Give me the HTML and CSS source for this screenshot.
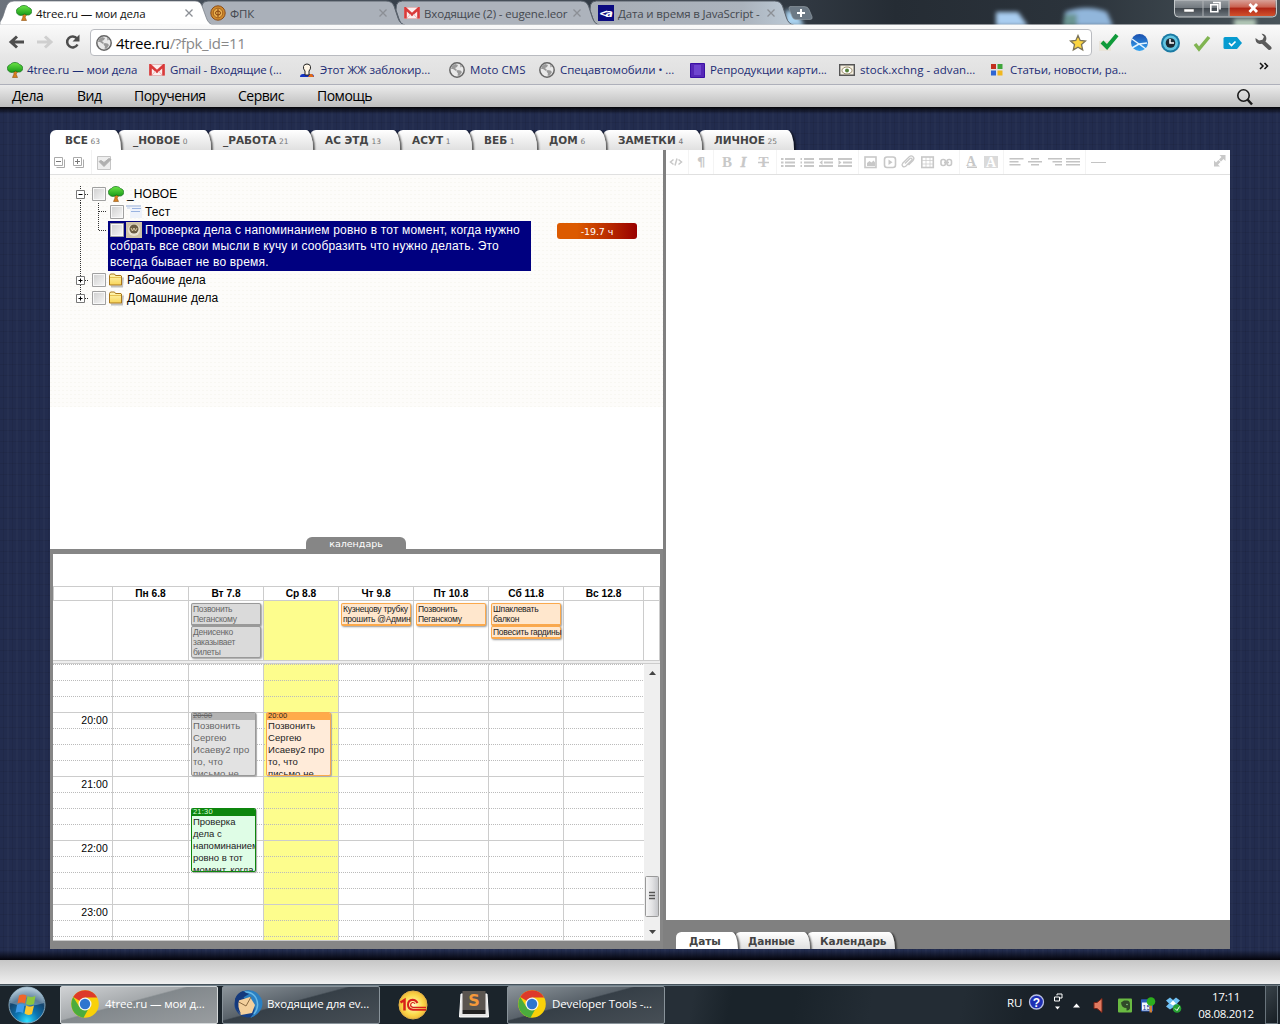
FILE: index.html
```html
<!DOCTYPE html>
<html lang="ru">
<head>
<meta charset="utf-8">
<title>4tree.ru — мои дела</title>
<link rel="stylesheet" href="styles.css">
</head>
<body>
<svg class="defs" width="0" height="0">
  <defs>
    <linearGradient id="gGreen" x2="0" y2="1"><stop offset="0" stop-color="#6be446"/><stop offset="1" stop-color="#189a18"/></linearGradient>
    <linearGradient id="gFolder" x2="0" y2="1"><stop offset="0" stop-color="#fff8b8"/><stop offset="1" stop-color="#f8d458"/></linearGradient>
    <linearGradient id="gCheck" x2="1" y2="1"><stop offset="0" stop-color="#d2d2d2"/><stop offset="1" stop-color="#f4f4f4"/></linearGradient>
    <linearGradient id="gBlue" x2="0" y2="1"><stop offset="0" stop-color="#1a4fae"/><stop offset="1" stop-color="#35a5f2"/></linearGradient>
    <radialGradient id="gOrb" cx=".5" cy=".95" r=".9"><stop offset="0" stop-color="#2fe0ff"/><stop offset=".35" stop-color="#0c77b5"/><stop offset=".7" stop-color="#15456e"/><stop offset="1" stop-color="#8fb0c6"/></radialGradient>
    <radialGradient id="gGold"><stop offset="0" stop-color="#fffbd0"/><stop offset=".7" stop-color="#fbd94a"/><stop offset="1" stop-color="#f0b93a"/></radialGradient>
  </defs>
  <symbol id="tree" viewBox="0 0 16 16"><path d="M6.500 9l.5 3-1.500 3.500h5L9 12l2.500-3z" fill="#d98020" stroke="#8f5412" stroke-width=".6"/><path d="M8 .5c2 0 3.500.7 4.500 2C14.500 3 16 4.500 15.600 6.500 15.600 9 13.500 10.500 11 10L8.500 9 6 10.200C3 11 .5 9 .4 6.500.3 4.500 1.500 3 3.500 2.500 4.500 1 6 .5 8 .5z" fill="url(#gGreen)" stroke="#12701a" stroke-width=".7"/></symbol>
  <symbol id="gmail" viewBox="0 0 16 12"><path d="M.5.5h15v11H.5z" fill="#fbeeee" stroke="#e3b7b7"/><path d="M1.500 11.500V1.500L8 7.500l6.500-6v10" fill="none" stroke="#d93a3a" stroke-width="2.600"/><path d="M3 11l3.500-4M13 11L9.500 7" stroke="#e8b5b5" fill="none"/></symbol>
  <symbol id="globe" viewBox="0 0 16 16"><circle cx="8" cy="8" r="7.200" fill="#e9e9e9" stroke="#666" stroke-width="1.500"/><path d="M3 4l3-2 3 1-1 2-2 1 2 2-1 1-3-2-2 0zM8.500 8l3 .5 1.500 1.500-2.500 4-2-.5 .5-2-1.500-2zM11 2.500l2 2-1.500 1z" fill="#999"/></symbol>
  <symbol id="folder" viewBox="0 0 16 16"><path d="M3 14.500h11l1-9" stroke="#999" stroke-width="2" fill="none" opacity=".6"/><path d="M1.500 13V3.500l1-1.500h4l1 1.500h5.500l.5.500V13z" fill="url(#gFolder)" stroke="#a9761a"/><path d="M2 5.500h11" stroke="#e6c050"/></symbol>
  <symbol id="box" viewBox="0 0 14 14"><path d="M.5.5h13v13H.5z" fill="#f8f8f8" stroke="#a0a0a0"/><path d="M2 2h10v10H2z" fill="url(#gCheck)"/></symbol>
  <symbol id="chrome" viewBox="0 0 28 28"><circle cx="14" cy="14" r="13.800" fill="#f9d109"/><path d="M14 14L2.200 7A13.800 13.800 0 0 1 26.200 7.500H14z" fill="#dd3a2a"/><path d="M2.200 7A13.800 13.800 0 0 0 12.500 27.700L18.500 17 14 14 8.500 17z" fill="#4bac3d"/><circle cx="14" cy="14" r="6.500" fill="#f4f4f4"/><circle cx="14" cy="14" r="5.200" fill="#2e75cf"/></symbol>
</svg>

<header class="titlebar">
  <svg class="titleart" width="1280" height="25" viewBox="0 0 1280 25">
    <defs>
      <linearGradient id="sky"><stop offset="0" stop-color="#6c737c"/><stop offset=".2" stop-color="#3a434e"/><stop offset=".63" stop-color="#303841"/><stop offset=".7" stop-color="#252c34"/><stop offset=".84" stop-color="#2b333b"/><stop offset="1" stop-color="#49545a"/></linearGradient>
      <linearGradient id="red" x2="0" y2="1"><stop offset="0" stop-color="#d9a198"/><stop offset=".45" stop-color="#c9604f"/><stop offset=".5" stop-color="#ae2415"/><stop offset="1" stop-color="#d2512c"/></linearGradient>
      <linearGradient id="glass" x2="0" y2="1"><stop offset="0" stop-color="#989da2"/><stop offset=".48" stop-color="#70777d"/><stop offset=".5" stop-color="#41484f"/><stop offset="1" stop-color="#717980"/></linearGradient>
      <linearGradient id="inact"><stop offset="0" stop-color="#a8aeb6"/><stop offset=".75" stop-color="#abb3bd"/><stop offset="1" stop-color="#bccad6"/></linearGradient>
      <filter id="soft" x="-50%" y="-50%" width="200%" height="200%"><feGaussianBlur stdDeviation="2"/></filter>
    </defs>
    <path d="M0 0h1280v25H0z" fill="url(#sky)"/>
    <g filter="url(#soft)"><path d="M996 12h22l10 14h-32z" fill="#a9cdf0"/><path d="M1065 12q22-8 42 0l6 14h-50z" fill="#91b6db"/><path d="M1065 14h12v12h-14z" fill="#6b9593"/><path d="M1234 19h22v8h-22z" fill="#b5cab9"/><path d="M786 10q12 0 18 16h-20z" fill="#a9d2ef"/></g>
    <path d="M590.500 5q1-4 6-4h178q6 0 8 5l4 12q2 6 7 7H598q-4-1-5-6l-3-9z" fill="url(#inact)" stroke="#59616b"/>
    <path d="M396.500 5q1-4 6-4h178q6 0 8 5l4 12q2 6 7 7H404q-4-1-5-6l-3-9z" fill="#adb3bc" stroke="#59616b"/>
    <path d="M202 5q1-4 6-4h178q6 0 8 5l4 12q2 6 7 7H200z" fill="#aab0b9" stroke="#59616b"/>
    <path d="M0 25V22Q3 18 5 10L7 5q2-4 7-4h181q5 0 7 5l4 11q2 7 8 8.500z" fill="#fff" stroke="#717780" stroke-width=".7"/>
    <path d="M0 24.500h1280v1H0z" fill="#fafafa"/>
    <path d="M790 6.500h14q4 0 5 3l3 7q1 3-2 3h-14q-3 0-4-3l-3-8q0-2 1-2z" fill="#6c7985" stroke="#99a2aa" stroke-width=".6"/>
    <path d="M797 13h8M801 9v8" stroke="#fff" stroke-width="2"/>
    <path d="M1174.500 0v13q0 4 4 4h94q4 0 4-4V0z" fill="url(#glass)" stroke="#c5c9cb"/>
    <path d="M1229.500 0h46v13q0 3-3 3h-43z" fill="url(#red)"/><path d="M1203 0v16M1229 0v16" stroke="#b0b4b7"/>
    <path d="M1184 9h10v3h-10z" fill="#fff" stroke="#555" stroke-width=".5"/><path d="M1210.800 4.800h7v7h-7zM1213 2.500h7v7" stroke="#fff" stroke-width="1.600" fill="none"/>
    <path d="M1249.500 4l7.500 8M1257 4l-7.500 8" stroke="#fff" stroke-width="2.800"/>
  </svg>
  <div class="btab"><svg width="16" height="16"><use href="#tree"/></svg><span class="on">4tree.ru — мои дела</span><svg class="x" width="8" height="8"><path d="M.5.5l7 7M7.500.5l-7 7"/></svg></div>
  <div class="btab"><svg width="16" height="16" viewBox="0 0 16 16"><circle cx="8" cy="8" r="7.200" fill="#cf8a2c" stroke="#8c4c18"/><circle cx="8" cy="8" r="4.800" fill="#e9b050" stroke="#a35f1c"/><path d="M8 4v8M5.500 8a2.500 2 0 1 0 5 0a2.500 2 0 1 0-5 0" fill="none" stroke="#85410e"/></svg><span>ФПК</span><svg class="x" width="8" height="8"><path d="M.5.5l7 7M7.500.5l-7 7"/></svg></div>
  <div class="btab"><svg width="16" height="12"><use href="#gmail"/></svg><span>Входящие (2) - eugene.leor</span><svg class="x" width="8" height="8"><path d="M.5.5l7 7M7.500.5l-7 7"/></svg></div>
  <div class="btab"><svg width="16" height="16" viewBox="0 0 16 16"><path d="M0 0h16v16H0z" fill="#0b0b80"/><text x="1" y="12" font-family="DejaVu Sans" font-size="11" font-weight="bold" font-style="italic" fill="#fff" textLength="14">&lt;a</text></svg><span>Дата и время в JavaScript -</span><svg class="x" width="8" height="8"><path d="M.5.5l7 7M7.500.5l-7 7"/></svg></div>
</header>

<div class="chrome">
  <div class="navbar">
    <svg width="82" height="26" viewBox="0 0 82 26"><path d="M24 13H12M17 7.500L11 13l6 5.500" fill="none" stroke="#4d4d4d" stroke-width="3"/><path d="M37 13h12M45 7.500l6 5.500-6 5.500" fill="none" stroke="#cfcfcf" stroke-width="3"/><path d="M77 9.500A5.500 5.500 0 1 0 77.500 15.500" fill="none" stroke="#4d4d4d" stroke-width="2.500"/><path d="M79.500 5.500v7h-7z" fill="#4d4d4d"/></svg>
    <div class="omnibox"><svg width="16" height="16"><use href="#globe"/></svg><span class="url">4tree.ru<b>/?fpk_id=11</b></span><svg class="star" width="18" height="18" viewBox="0 0 18 18"><path d="M9 1.500l2.200 5 5.300.5-4 3.600 1.200 5.300L9 13.200 4.300 15.900l1.200-5.300-4-3.600 5.300-.5z" fill="#fbd541" stroke="#7b7358" stroke-width="1.300"/></svg></div>
    <svg width="184" height="26" viewBox="1096 0 184 26">
      <path d="M1099 12h12v10h-12z" fill="#e9e4da"/><path d="M1102 13l5 5 10-12" fill="none" stroke="#109a3a" stroke-width="4"/>
      <circle cx="1139.500" cy="13.500" r="8.500" fill="url(#gBlue)"/><path d="M1132 10l7 5 8-1M1132 19l7-4 7 5" stroke="#e4f4ff" stroke-width="1.500" fill="none"/>
      <circle cx="1170.500" cy="14" r="9.500" fill="#1c7ba4"/><circle cx="1170.500" cy="14" r="7.500" fill="#63c6e2"/><circle cx="1170.500" cy="14" r="4.800" fill="#1c2a33"/><path d="M1170 10v4h4" stroke="#fff" stroke-width="1.500" fill="none"/>
      <path d="M1195 15l4 5 10-12" fill="none" stroke="#80b451" stroke-width="3.500"/>
      <path d="M1225 8h12l5 6-5 6h-12q-1.500 0-1.500-1.500v-9Q1223.500 8 1225 8z" fill="#079bd0"/><path d="M1229 14l2.500 2.500 4-4" stroke="#fff" stroke-width="1.700" fill="none"/>
      <path d="M1263 13l6.500 6" stroke="#5a5a5a" stroke-width="4" stroke-linecap="round"/><path d="M1255.500 9q-.5 5 4 6 3 .5 5.500-2 2.500-3 .5-6.500-1.500-2-4-1.700l2.500 3-1.500 3-3.500.7z" fill="#5a5a5a"/>
    </svg>
  </div>
  <nav class="bookmarks">
    <a style="width:142px"><svg width="16" height="16"><use href="#tree"/></svg><span>4tree.ru — мои дела</span></a>
    <a style="width:150px"><svg width="16" height="12"><use href="#gmail"/></svg><span class="s16">Gmail - Входящие (...</span></a>
    <a style="width:150px"><svg width="16" height="16" viewBox="0 0 16 16"><path d="M1 15q0-3 3-3h8q3 0 3 3z" fill="#1231c4"/><path d="M9 15l2-3h2l2 3z" fill="#e26a1a"/><path d="M6 13V9Q4 7 4.500 4.500 5 2 8 2t3.500 2.500Q12 7 10 9v4z" fill="#fff6e6" stroke="#222"/></svg><span class="s16">Этот ЖЖ заблокир...</span></a>
    <a style="width:90px"><svg width="16" height="16"><use href="#globe"/></svg><span class="s16 wide">Moto CMS</span></a>
    <a style="width:151px"><svg width="16" height="16"><use href="#globe"/></svg><span class="s16">Спецавтомобили • ...</span></a>
    <a style="width:149px"><svg width="15" height="15" viewBox="0 0 15 15"><path d="M.5.5h14v14H.5z" fill="#5628b8" stroke="#3a10a4"/><path d="M4 2h7v10H4z" fill="#6f45d0"/></svg><span class="s16">Репродукции карти...</span></a>
    <a style="width:150px"><svg width="16" height="16" viewBox="0 0 16 16"><path d="M.7 2.700h14.600v10.600H.7z" fill="#f4efe0" stroke="#555" stroke-width="1.400"/><ellipse cx="8" cy="8.500" rx="5" ry="3.500" fill="#fff" stroke="#9a8c6b"/><circle cx="8" cy="8.500" r="2" fill="#55803b"/></svg><span class="s16 wide">stock.xchng - advan...</span></a>
    <a style="width:150px"><svg width="16" height="16" viewBox="0 0 16 16"><path d="M2 2h5v5H2z" fill="#c2301f"/><path d="M8.500 2h5v5h-5z" fill="#3ea63c"/><path d="M2 8.500h5v5H2z" fill="#2e66d4"/><path d="M8.500 8.500h5v5h-5z" fill="#f0b71f"/></svg><span class="s16">Статьи, новости, ра...</span></a>
    <svg class="more" width="10" height="8" viewBox="0 0 10 8"><path d="M1 1l3 3-3 3M5.500 1l3 3-3 3" fill="none" stroke="#111" stroke-width="1.500"/></svg>
  </nav>
</div>

<nav class="menu"><span style="width:65px">Дела</span><span style="width:57px">Вид</span><span style="width:104px">Поручения</span><span style="width:79px">Сервис</span><span>Помощь</span>
  <svg width="20" height="18" viewBox="0 0 20 18"><circle cx="8.500" cy="7.500" r="5.700" fill="none" stroke="#1a1a1a" stroke-width="1.600"/><path d="M12.500 11.500l4.500 5" stroke="#1a1a1a" stroke-width="2.500"/></svg>
</nav>

<main class="desk">
  <div class="tabs top">
    <div class="tab active" style="width:71px">ВСЕ <small>63</small></div>
    <div class="tab" style="width:93px">_НОВОЕ <small>0</small></div>
    <div class="tab" style="width:105px">_РАБОТА <small>21</small></div>
    <div class="tab" style="width:90px">АС ЭТД <small>13</small></div>
    <div class="tab" style="width:75px">АСУТ <small>1</small></div>
    <div class="tab" style="width:68px">ВЕБ <small>1</small></div>
    <div class="tab" style="width:72px">ДОМ <small>6</small></div>
    <div class="tab" style="width:99px">ЗАМЕТКИ <small>4</small></div>
    <div class="tab" style="width:95px">ЛИЧНОЕ <small>25</small></div>
  </div>
  <div class="panes">
    <section class="left">
      <div class="treebar"><svg width="70" height="24" viewBox="0 0 70 24"><g fill="none" stroke="#aaa"><path d="M4.500 7.500h8v8h-8zM14.500 9.500v8h-8M23.500 7.500h8v8h-8zM33.500 9.500v8h-8"/></g><path d="M6 11.500h5M25 11.500h5M27.500 9v5" stroke="#777"/><path d="M41.500 0v24" stroke="#f2f2f2"/><path d="M47.500 6.500h13v13h-13z" fill="#eee" stroke="#c5c5c5"/><path d="M49 11.500l5 5 7-7-2-1-5 4-3-2z" fill="#b0b0b0" stroke="#b0b0b0"/></svg></div>
      <div class="tree">
        <div class="row"><svg width="18" height="18"><path d="M6.500 1v17M7 9.500h7" class="dot"/><path d="M2.500 5.500h8v8h-8z" class="knob"/><path d="M4.500 9.500h4" class="sign"/></svg><svg class="cb" width="14" height="14"><use href="#box"/></svg><svg width="16" height="16"><use href="#tree"/></svg><span>_НОВОЕ</span></div>
        <div class="row"><svg width="36" height="18"><path d="M6.500 0v18M24.500 0v18M25 8.500h7" class="dot"/></svg><svg class="cb" width="14" height="14"><use href="#box"/></svg><svg width="16" height="16" viewBox="0 0 16 16"><path d="M4 3h12v11H4z" fill="#eef2fa"/><path d="M0 1h15v2H0z" fill="#c7d3e8"/><path d="M1 3h3v2H1z" fill="#dde5f2"/><path d="M6 4.500h9M5 7.500h9" stroke="#9ab3e0"/></svg><span>Тест</span></div>
        <div class="row tall"><svg width="34" height="50"><path d="M6.500 0v50M24.500 0v9.500h8" class="dot"/></svg><p class="sel"><svg width="14" height="14"><use href="#box"/></svg><svg class="pic" width="16" height="16" viewBox="0 0 16 16"><path d="M0 0h16v16H0z" fill="#cfc3a6"/><circle cx="8" cy="8" r="6" fill="#e9e2d2"/><circle cx="8" cy="7" r="4.500" fill="#6a5c42"/><path d="M5 6l1.500 3L8 6l1.500 3L11 6" stroke="#d9caa5" fill="none"/></svg><span>Проверка дела с напоминанием ровно в тот момент, когда нужно<br>собрать все свои мысли в кучу и сообразить что нужно делать. Это<br>всегда бывает не во время.</span></p><div class="due">-19.7 ч</div></div>
        <div class="row"><svg width="18" height="18"><path d="M6.500 0v18M7 9.500h7" class="dot"/><path d="M2.500 5.500h8v8h-8z" class="knob"/><path d="M4.500 9.500h4M6.500 7.500v4" class="sign"/></svg><svg class="cb" width="14" height="14"><use href="#box"/></svg><svg width="16" height="16"><use href="#folder"/></svg><span>Рабочие дела</span></div>
        <div class="row"><svg width="18" height="18"><path d="M6.500 0v9M7 9.500h7" class="dot"/><path d="M2.500 5.500h8v8h-8z" class="knob"/><path d="M4.500 9.500h4M6.500 7.500v4" class="sign"/></svg><svg class="cb" width="14" height="14"><use href="#box"/></svg><svg width="16" height="16"><use href="#folder"/></svg><span>Домашние дела</span></div>
      </div>
      <div class="handle"><span>календарь</span></div>
      <div class="cal">
        <div class="days"><b></b><b>Пн 6.8</b><b>Вт 7.8</b><b>Ср 8.8</b><b>Чт 9.8</b><b>Пт 10.8</b><b>Сб 11.8</b><b>Вс 12.8</b><b></b></div>
        <div class="allday">
          <div></div><div></div>
          <div><p class="past">Позвонить<br>Пеганскому</p><p class="past">Денисенко<br>заказывает<br>билеты</p></div>
          <div class="today"></div>
          <div><p>Кузнецову трубку<br>прошить @Админ</p></div>
          <div><p>Позвонить<br>Пеганскому</p></div>
          <div><p>Шпаклевать<br>балкон</p><p>Повесить гардины</p></div>
          <div></div><div></div>
        </div>
        <div class="split"></div>
        <div class="grid">
          <div class="col hours"><time>20:00</time><time>21:00</time><time>22:00</time><time>23:00</time></div>
          <div class="col"></div>
          <div class="col"><div class="ev past"><h6>20:00</h6>Позвонить Сергею Исаеву2 про то, что письмо не</div><div class="ev green"><h6>21:30</h6>Проверка дела с напоминанием ровно в тот момент, когда</div></div>
          <div class="col today"><div class="ev"><h6>20:00</h6>Позвонить Сергею Исаеву2 про то, что письмо не</div></div>
          <div class="col"></div><div class="col"></div><div class="col"></div><div class="col last"></div>
          <div class="scroll"><svg width="16" height="276" viewBox="0 0 16 276"><defs><linearGradient id="th"><stop offset="0" stop-color="#f6f6f6"/><stop offset=".5" stop-color="#e3e3e5"/><stop offset="1" stop-color="#c3c4c8"/></linearGradient></defs><path d="M5 11l3.500-4 3.500 4zM5 266h7l-3.500 4z" fill="#444"/><rect x="1.500" y="212.500" width="13" height="40" rx="1" fill="url(#th)" stroke="#999"/><path d="M5 228.500h6M5 231.500h6M5 234.500h6" stroke="#555" stroke-width="1.500"/></svg></div>
        </div>
      </div>
    </section>
    <section class="right">
      <div class="editbar">
        <svg width="564" height="24" viewBox="666 0 564 24">
          <g stroke="#f4f4f4"><path d="M688.500 0v24M713.500 0v24M776.500 0v24M858.500 0v24M959.500 0v24M1003.500 0v24M1085.500 0v24"/></g>
          <g fill="none" stroke="#c8c8c8" stroke-width="1.500"><path d="M673.500 9.500l-3 2.500 3 2.500M678.500 9.500l3 2.500-3 2.500M677 8.500l-2 7"/></g>
          <g fill="#c8c8c8" font-family="Liberation Serif" font-weight="bold" font-size="15"><text x="697" y="16" font-family="DejaVu Sans" font-size="13">¶</text><text x="722" y="17">B</text><text x="740.500" y="17" font-style="italic" stroke="#c8c8c8" stroke-width=".4">I</text><text x="758.500" y="17">T</text><text x="966" y="16" font-size="14">A</text></g>
          <path d="M758 12.500h11M967 17.300h10" stroke="#c8c8c8" stroke-width="1.600"/>
          <g stroke="#c8c8c8" stroke-width="2"><path d="M785 9h10M785 12.500h10M785 16h10M804 9h10M804 12.500h10M804 16h10M819 9h14M824 12.500h9M819 16h14M838 9h14M843 12.500h9M838 16h14"/><path d="M781 9h2.500M781 12.500h2.500M781 16h2.500M800.500 9h1.500M800.500 12.500h1.500M800.500 16h1.500"/></g>
          <path d="M822.500 10v5l-3-2.500zM838.500 10v5l3-2.500z" fill="#c8c8c8"/>
          <g fill="none" stroke="#c8c8c8" stroke-width="1.600"><rect x="865" y="7" width="11" height="10.500"/><path d="M867 16v-3l2.500-2 2 1.500 2-2 1.500 2v3.500z" fill="#c8c8c8" stroke="none"/><rect x="884.500" y="7" width="11" height="10.500" rx="2.500"/><path d="M888.500 9.500v5.500l4-2.700z" fill="#c8c8c8" stroke="none"/><path d="M905 13.500l5-5q1-.8 1.700 0t0 1.700l-6 6q-1.700 1.300-3 0t0-3l6.500-6.500q2-1.500 3.800 0t0 3.800l-4.500 4.500" stroke-width="1.300"/><rect x="921.800" y="7" width="11.500" height="10.500"/><path d="M922 10.500h11M922 14h11M926 7v10M930 7v10" stroke-width=".7"/><rect x="941" y="9.500" width="4.500" height="6" rx="2"/><rect x="947" y="9.500" width="4.500" height="6" rx="2"/><path d="M944 12.500h5"/></g>
          <path d="M984 6h14v12h-14z" fill="#dadada"/><text x="986" y="17" fill="#fff" font-family="Liberation Serif" font-weight="bold" font-size="14">A</text>
          <g stroke="#c4c4c4" stroke-width="1.500"><path d="M1009.500 8.700h14M1009.500 11.700h9M1009.500 14.700h11M1031 8.700h8M1028 11.700h14M1031 14.700h8M1048 8.700h14M1052.500 11.700h9.500M1055 14.700h7M1066 8.700h14M1066 11.700h14M1066 14.700h14"/><path d="M1091 12.500h15" stroke-width="1"/></g>
          <path d="M1219.500 5h6v6l-2-2-2.500 2.500-2-2 2.500-2.500zM1220 16.500h-6v-6l2 2 2.500-2.500 2 2-2.500 2.500z" fill="#c8c8c8"/>
        </svg>
      </div>
      <div class="paper"></div>
      <div class="tabs bottom">
        <div class="tab active" style="width:62px">Даты</div>
        <div class="tab" style="width:75px">Данные</div>
        <div class="tab" style="width:88px">Календарь</div>
      </div>
    </section>
  </div>
</main>
<div class="pagefoot"></div>

<footer class="taskbar">
  <svg class="orb" width="40" height="38" viewBox="0 0 40 38"><circle cx="20" cy="19" r="18" fill="url(#gOrb)" stroke="#84a5b9"/><path d="M3 17a17 16 0 0 1 34 0q-17 6-34 0z" fill="#fff" opacity=".3"/><path d="M12 9.500q4-2 7.500 0L18 17.500q-4-2-7.500 0z" fill="#f0662a"/><path d="M20.500 10q4 2 8-.3L27 18q-4 2-8 0z" fill="#8cc63e"/><path d="M10 19q4-2 7.500 0L16 27q-4-2-7.500 0z" fill="#3f9bea"/><path d="M19 19.500q4 2 8 0L25 28q-4 2-7.500-.5z" fill="#fdc92f"/></svg>
  <div class="task lit"><svg width="28" height="28"><use href="#chrome"/></svg><span>4tree.ru — мои д...</span></div>
  <div class="task"><svg width="30" height="30" viewBox="0 0 30 30"><circle cx="15" cy="15" r="13.500" fill="#163f86"/><path d="M8 3Q18-1 24 4q7 6 5 14-3 8-12 11 6-6 4-12L11 9z" fill="#2a7fc2"/><path d="M12 3q8 0 11 6 4 8-2 16" fill="none" stroke="#67b8e6" stroke-width="1.500"/><path d="M4 12l13-4 5 8-3 8-11 2q-5-5-4-14z" fill="#f3cf9c"/><path d="M4 12l9 5 5-9" fill="none" stroke="#8b6a42"/><path d="M2 10q2-6 8-8 3 2 6 3L6 11q-2 6 2 14-6-4-6-15z" fill="#14397c"/></svg><span class="pull">Входящие для ev...</span></div>
  <svg class="one" width="30" height="30" viewBox="0 0 30 30"><circle cx="15" cy="15" r="14" fill="url(#gGold)" stroke="#e3b449"/><g fill="none" stroke="#d8201a"><path d="M2.500 12.500l4-2.500V20.500" stroke-width="2.500"/><path d="M19.500 13q-1.500-3.300-5-3.300-4.500.5-4.500 5t5 5H28" stroke-width="2"/><path d="M17 13.800q-.8-1.500-2.600-1.300-1.800.6-1.800 2.500t2.300 2.300H28" stroke-width="1.200"/></g></svg>
  <svg class="subl" width="32" height="30" viewBox="0 0 32 30"><path d="M3 4L1.500 27h29L29 4z" fill="#e5e5e5" stroke="#fff"/><path d="M4.500 1h23v19h-23z" fill="#5a5550"/><path d="M4.500 20h23v4h-23z" fill="#222"/><text x="16" y="16" text-anchor="middle" font-family="DejaVu Sans" font-weight="bold" font-size="16" fill="#f5993a">S</text></svg>
  <div class="task"><svg width="28" height="28"><use href="#chrome"/></svg><span>Developer Tools -...</span></div>
  <span class="lang">RU</span>
  <svg class="tray" width="160" height="26" viewBox="1028 991.500 160 26">
    <circle cx="1037.500" cy="1001.500" r="7" fill="#1e2fb4" stroke="#b8bfe4" stroke-width="1.300"/><text x="1037.500" y="1006" text-anchor="middle" font-family="Liberation Sans" font-weight="bold" font-size="12" fill="#fff">?</text>
    <path d="M1055.500 996.500h5v4h-5zM1058 995v-1.500h5v4h-2" fill="none" stroke="#fff"/><path d="M1056 1006h5l-2.500 3zM1074 1007h7l-3.500-4z" fill="#fff"/>
    <path d="M1095 1002h3l5-4v14l-5-4h-3z" fill="#e07a60" stroke="#7a2417"/>
    <rect x="1119" y="998" width="14" height="14" rx="1" fill="#6aba42"/><path d="M1122 1002l3-2h3q3 0 3 4v4q-1 2.500-3.500 2v-2.500q-5 0-5.500-5.500z" fill="#304a28"/><circle cx="1128" cy="1004" r=".8" fill="#8c8"/>
    <path d="M1142.500 999.500h11v11h-11z" fill="#f2f6ff" stroke="#2b5bb8"/><path d="M1142 999h12v3h-12z" fill="#2b5bb8"/><text x="1143.500" y="1009" font-family="Liberation Sans" font-size="7" fill="#123a93">15</text><path d="M1150.500 1003h2.500v9h-2.500z" fill="#d08037"/><circle cx="1152" cy="1001" r="4.300" fill="#2cae1d"/>
    <path d="M1167 1000l4-3 3 2.500 3-2.500 4 3-3 3 3 3-4 3-3-2-3 2-4-3 3-3z" fill="#6fc0f3"/><path d="M1171 1003l3-3 3 3-3 2z" fill="#fff"/><circle cx="1178" cy="1008" r="4.300" fill="#27a032"/><path d="M1176 1008l2 2 2.500-4" stroke="#fff" fill="none"/>
  </svg>
  <div class="clock"><span>17:11</span><span>08.08.2012</span></div>
  <div class="peek"></div>
</footer>
</body>
</html>
```
FILE: styles.css
```css
* { box-sizing: border-box; }
body { margin: 0; width: 1280px; height: 1024px; overflow: hidden; display: flex; flex-direction: column; font-family: "Liberation Sans", Arial, sans-serif; background: #222b4b; }
.defs { position: absolute; }
svg { display: block; flex: none; }
p, h6 { margin: 0; font-weight: normal; }

/* browser frame */
.titlebar { position: relative; height: 25px; flex: none; display: flex; padding-left: 16px; font: 11.5px/25px "Open Sans", sans-serif; }
.titleart { position: absolute; left: 0; top: 0; }
.btab { position: relative; width: 194px; display: flex; align-items: center; gap: 4px; color: #44484f; white-space: nowrap; padding-top: 1px; }
.btab span { width: 146px; letter-spacing: -.15px; }
.btab .on { color: #111; }
.btab .x { stroke: #8b8f95; stroke-width: 1.300; fill: none; margin-left: -1px; }
.chrome { height: 60px; flex: none; background: linear-gradient(#fafafa, #e6e6e6 55%, #dedede); border-bottom: 1px solid #aeb0ba; }
.navbar { height: 33px; padding-top: 4px; display: flex; gap: 8px; }
.omnibox { width: 1002px; height: 27px; border: 1px solid #b9bbc0; border-radius: 4px; background: #fff; display: flex; align-items: center; padding-left: 5px; }
.navbar > svg:last-child { margin-left: -4px; }
.url { margin-left: 4px; flex: 1; font: 15px/24px "Open Sans", sans-serif; color: #000; letter-spacing: -.32px; }
.url b { font-weight: normal; color: #888; }
.star { margin-right: 4px; }
.bookmarks { display: flex; padding-left: 7px; height: 24px; font: 11.5px/24px "Open Sans", sans-serif; color: #1c2c74; letter-spacing: -.1px; }
.bookmarks a { display: flex; align-items: center; gap: 4px; white-space: nowrap; }
.bookmarks .s16 { margin-left: 1px; }
.bookmarks .wide { letter-spacing: .05px; }
.more { margin: 4px 0 0 120px; }
.menu { height: 22px; flex: none; display: flex; padding-left: 12px; background: linear-gradient(#ececec, #bdbdbd); font: 14px/22px "Open Sans", sans-serif; letter-spacing: -.5px; color: #000; }
.menu svg { margin: 3px 25px 0 auto; }

/* workspace */
.desk { height: 853px; flex: none; padding: 23px 50px 0; display: flex; flex-direction: column;
  background: linear-gradient(#050509, transparent 7px, transparent 843px, #03030a), repeating-linear-gradient(90deg, #0000 0 3px, #0001 3px 4px, #0000 4px 7px, #ffffff05 7px 9px), repeating-linear-gradient(#0000 0 4px, #00000012 4px 5px, #0000 5px 11px), #222c4e; }
.tabs { display: flex; font: bold 10.500px/20px "DejaVu Sans", Verdana, sans-serif; color: #444; }
.tabs.top { height: 20px; }
.tab { position: relative; padding-left: 15px; margin-right: -3px; white-space: nowrap; border-radius: 6px 7px 0 0 / 6px 19px 0 0; background: linear-gradient(#fff, #e0e0e0); box-shadow: 2px 1px 2px #0009; clip-path: inset(0 -4px 0 0); line-height: 21px; }
.tab.active { background: #fff; }
.tab small { font-size: 7.500px; font-weight: normal; color: #777; margin-left: -1px; }
.tab:nth-child(1) { z-index: 9; } .tab:nth-child(2) { z-index: 8; } .tab:nth-child(3) { z-index: 7; } .tab:nth-child(4) { z-index: 6; } .tab:nth-child(5) { z-index: 5; } .tab:nth-child(6) { z-index: 4; } .tab:nth-child(7) { z-index: 3; } .tab:nth-child(8) { z-index: 2; }
.panes { display: flex; height: 799px; background: #808080; }
.left { width: 613px; margin-right: 3px; display: flex; flex-direction: column; background: #fff; }
.treebar, .editbar { height: 25px; border-bottom: 1px solid #e0e0e0; background: #fff; flex: none; }
.tree { height: 232px; padding: 10px 0 0 24px; background: repeating-linear-gradient(90deg, #fdfcfa00 0 2px, #fdfcfa 2px 4px), repeating-linear-gradient(#fdfcfa 0 3px, #f8f7f2 3px 4px); font-size: 12px; }
.row { height: 18px; display: flex; align-items: center; letter-spacing: .12px; }
.row .cb { margin-right: 2px; }
.row > span { margin-left: 3px; }
.row.tall { height: 50px; }
.sel { width: 423px; height: 50px; padding: 1px 2px; background: #000080; color: #fff; line-height: 16px; letter-spacing: .18px; white-space: nowrap; }
.sel svg { display: inline-block; vertical-align: top; margin: 1px 2px 0 0; }
.sel .pic { margin: 0 3px 0 0; }
.due { width: 80px; height: 16px; margin: 0 0 32px 26px; align-self: flex-end; border-radius: 3px; background: linear-gradient(90deg, #dc5a00 25%, #900); color: #fff; font: 9.500px/17px "DejaVu Sans", sans-serif; text-align: center; letter-spacing: -.1px; }
.dot { fill: none; stroke: #333; stroke-dasharray: 1 1; }
.knob { fill: #fff; stroke: #777; }
.sign { stroke: #000; }
.handle { height: 147px; flex: none; padding: 130px 257px 0 256px; border-bottom: 5px solid #868686; }
.handle span { display: block; height: 12px; border-radius: 6px 6px 0 0; background: #868686; color: #fff; font: 9.500px/14px "DejaVu Sans", sans-serif; text-align: center; }

/* calendar */
.cal { height: 395px; padding-top: 32px; border: solid #868686; border-width: 0 3px 8px; background: #fff; }
.days, .allday, .grid { display: grid; grid-template-columns: 60px 76px 75px 75px 75px 75px 75px 80px 16px; }
.days { height: 14px; border-top: 1px solid #ccc; border-left: 1px solid #ccc; font-size: 10.200px; line-height: 13px; text-align: center; grid-template-columns: 59px 76px 75px 75px 75px 75px 75px 80px 16px; }
.days b, .allday > div { border-right: 1px solid #ccc; }
.allday { height: 61px; border: solid #ccc; border-width: 1px 0; }
.allday > div { padding: 2px 2px 0; }
.today { background-color: #fdfd8d; }
.allday p { width: 70px; border: 1px solid #fba94c; border-bottom-width: 2px; border-radius: 2px; background: #ffe7cd; box-shadow: 1px 1px 2px #999; font-size: 8.500px; line-height: 10px; color: #222; letter-spacing: -.25px; padding-left: 1px; white-space: nowrap; }
.allday p.past { background: #dadada; border-color: #999; color: #666; }
.allday p.past + p { border-bottom-width: 1px; }
.split { height: 3px; background: #eee; border-bottom: 1px solid #ccc; }
.grid { height: 277px; border-bottom: 1px solid #ccc; overflow: hidden; }
.col { border-right: 1px solid #ccc; padding: 48px 0 0 2px; height: 276px; overflow: hidden;
  background-image: linear-gradient(#ccc 1px, transparent 1px), conic-gradient(from 0deg at 1px 1px, transparent 0 270deg, #bbb 0);
  background-size: 100% 64px, 2px 16px; background-position: 0 48px, 0 0; }
.col.last { border-right: 0; }
.hours time { display: block; height: 64px; padding: 2px 4px 0 0; text-align: right; font-size: 10.500px; letter-spacing: .1px; }
.ev { width: 65px; height: 64px; overflow: hidden; border: 1px solid #fba94c; border-radius: 2px; background: #ffebd9; box-shadow: 1px 1px 1px #aaa; font-size: 9.500px; line-height: 12px; color: #222; padding-left: 1px; letter-spacing: .08px; }
.ev h6 { margin: -1px -1px 0 -2px; padding-left: 2px; height: 8px; font-size: 7.500px; line-height: 8px; background: #ffab4a; }
.ev.past { background: #e2e2e2; border-color: #999; color: #666; }
.ev.past h6 { background: #b3b3b3; text-decoration: line-through; }
.ev.green { margin-top: 32px; background: #dffde6; border-color: #0d860d; letter-spacing: -.02px; }
.ev.green h6 { background: #0d860d; color: #dfffdf; letter-spacing: .2px; }
.scroll { background: #efefef; }

/* editor */
.right { width: 564px; display: flex; flex-direction: column; }
.paper { height: 745px; background: #fff; }
.bottom { padding: 12px 0 0 10px; }
.bottom .tab { height: 17px; line-height: 19px; padding-left: 13px; letter-spacing: -.12px; }
.pagefoot { height: 24px; flex: none; background: linear-gradient(#c6c6c6, #efefef); }

/* taskbar */
.taskbar { height: 40px; flex: none; display: flex; align-items: center; padding: 0 0 0 7px; border-top: 1px solid #46535c; box-shadow: inset 0 1px #71818b; color: #fff; font: 11.500px/16px "Open Sans", sans-serif; background: linear-gradient(100deg, #1b242b 0 46%, #262f37 48% 54%, #1a232a 57% 62%, #232c34 68% 75%, #1a2229 80%); }
.orb { margin-right: 13px; }
.task { width: 158px; height: 38px; margin-right: 4px; display: flex; align-items: center; gap: 6px; padding: 0 0 2px 10px; border: 1px solid #89939a; border-radius: 2px; white-space: nowrap; background: linear-gradient(165deg, #8c949a, #59626a 42%, #363f47 44%, #474f56); }
.task.lit { border-color: #d4d8da; background: linear-gradient(165deg, #d0d2d4, #a5a9ac 42%, #82888c 44%, #999da0); }
.task span { letter-spacing: -.12px; }
.task .pull { margin-left: -2px; }
.one { margin: 0 30px 0 14px; }
.subl { margin-right: 17px; }
.lang { margin: -4px 0 0 338px; width: 20px; }
.clock { width: 82px; margin-left: -2px; display: flex; flex-direction: column; text-align: center; line-height: 17px; letter-spacing: -.3px; }
.peek { width: 13px; height: 39px; margin-left: -2px; border: 1px solid #69747c; background: linear-gradient(135deg, #39434a, #171e24); }
```
